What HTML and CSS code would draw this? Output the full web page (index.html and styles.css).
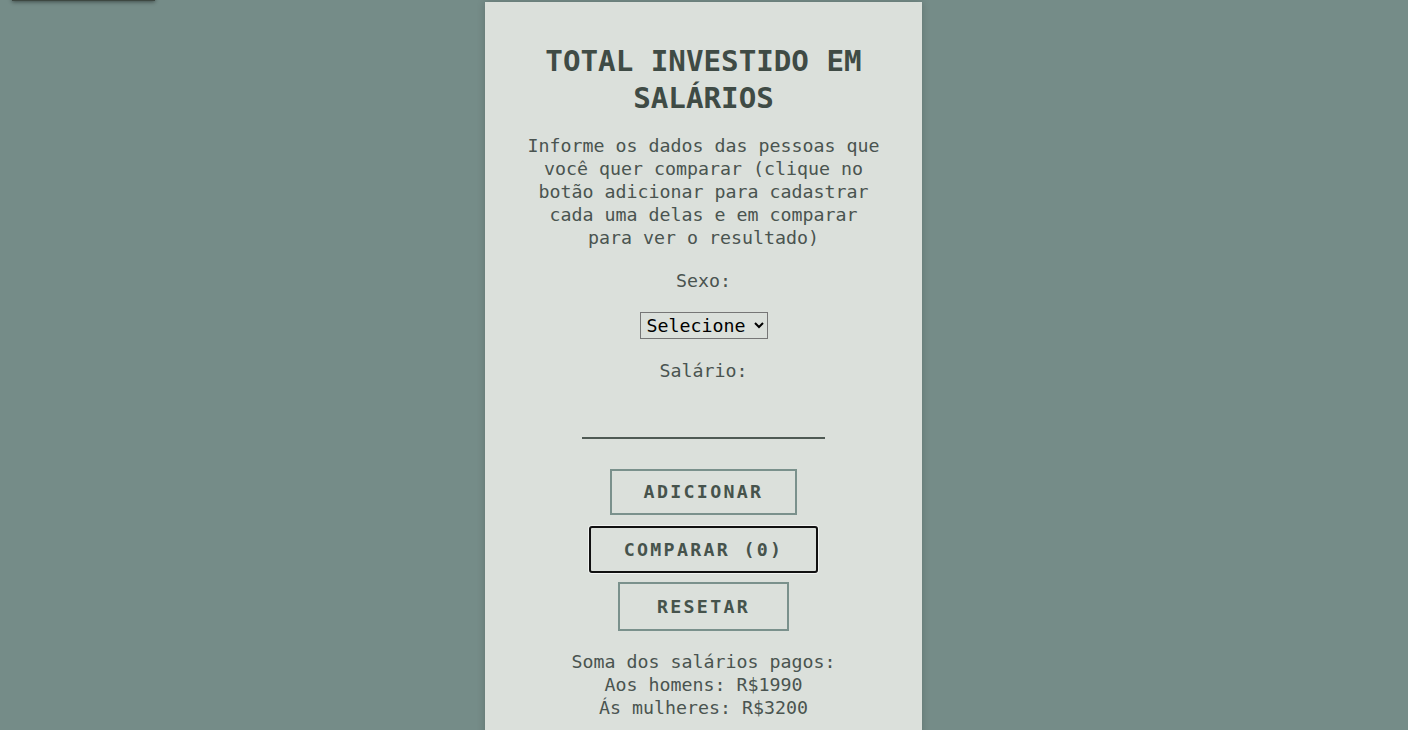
FILE: index.html
```html
<!DOCTYPE html>
<html lang="pt-BR">
<head>
<meta charset="utf-8">
<title>Total investido em salários</title>
<link rel="stylesheet" href="styles.css">
</head>
<body>
<div class="topbar"></div>
<main class="card">
  <h1 class="title">TOTAL INVESTIDO EM SALÁRIOS</h1>
  <p class="intro">Informe os dados das pessoas que você quer comparar (clique no botão adicionar para cadastrar cada uma delas e em comparar para ver o resultado)</p>
  <label class="label label-sexo" for="sexo">Sexo:</label>
  <select class="select" id="sexo">
    <option>Selecione</option>
    <option>Masculino</option>
    <option>Feminino</option>
  </select>
  <label class="label label-salario" for="salario">Salário:</label>
  <input class="input" id="salario" type="text">
  <button class="btn btn-add">Adicionar</button>
  <button class="btn btn-compare">Comparar (0)</button>
  <button class="btn btn-reset">Resetar</button>
  <div class="result">
    <div>Soma dos salários pagos:</div>
    <div>Aos homens: R$1990</div>
    <div>Ás mulheres: R$3200</div>
  </div>
</main>
</body>
</html>
```
FILE: styles.css
```css
html, body {
  margin: 0;
  padding: 0;
}
body {
  background: #758c88;
  font-family: "DejaVu Sans Mono", "Liberation Mono", monospace;
  font-size: 18.3px;
  line-height: 23px;
  color: #4a5450;
  overflow: hidden;
  height: 730px;
  padding-right: 1px;
}
.topbar {
  position: absolute;
  top: -40px;
  left: 12px;
  width: 143px;
  height: 41px;
  background: #3e4842;
  box-shadow: 0 1px 4px rgba(0, 0, 0, 0.45);
}
.card {
  width: 437px;
  box-sizing: border-box;
  margin: 2px auto 0;
  padding: 41px 40px 40px;
  min-height: 780px;
  background: #dbe0db;
  box-shadow: 0 0 8px rgba(0, 0, 0, 0.18);
  display: flex;
  flex-direction: column;
  align-items: center;
  text-align: center;
}
.title {
  margin: 0;
  font-size: 29.2px;
  line-height: 37px;
  font-weight: bold;
  color: #3f4b45;
}
.intro {
  margin: 17px 0 0;
}
.label {
  display: block;
}
.label-sexo {
  margin-top: 20px;
}
.select {
  margin-top: 20px;
  width: 128px;
  height: 27px;
  font-family: inherit;
  font-size: 18.3px;
  color: #000;
  background: transparent;
  border: 1px solid #767676;
  border-radius: 0;
  padding: 0 2px 0 2px;
}
.label-salario {
  margin-top: 20px;
}
.input {
  margin-top: 19px;
  width: 243px;
  height: 38px;
  box-sizing: border-box;
  border: none;
  border-bottom: 2px solid #4f5a54;
  background: transparent;
  font-family: inherit;
  font-size: 18.3px;
  outline: none;
}
.btn {
  background: transparent;
  border: 2px solid #7a918c;
  border-radius: 0;
  font-family: inherit;
  font-size: 18.3px;
  font-weight: bold;
  line-height: 22px;
  letter-spacing: 2.3px;
  text-transform: uppercase;
  color: #46534c;
  padding: 10px 32px;
  cursor: pointer;
}
.btn-add {
  margin-top: 30px;
}
.btn-compare {
  margin-top: 11px;
  padding: 10.5px 32.5px;
  border-color: #111;
  border-radius: 3px;
  box-shadow: 0 0 0 1px rgba(255, 255, 255, 0.6);
}
.btn-reset {
  margin-top: 9px;
  padding: 11.5px 36.5px 11px;
}
.result {
  margin-top: 19.5px;
}
```
